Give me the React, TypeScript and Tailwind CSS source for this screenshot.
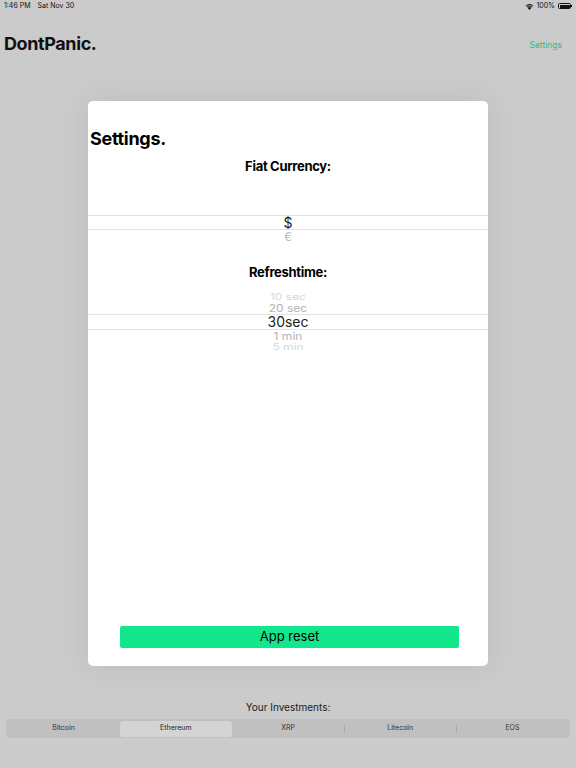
import React from "react";

const font = { fontFamily: 'Inter, "Liberation Sans", sans-serif' };

const tabs = ["Bitcoin", "Ethereum", "XRP", "Litecoin", "EOS"];

const StatusBar: React.FC = () => (
    <div className="h-[12px] flex items-center justify-between px-[4px] text-[7px] text-[#111]">
        <div className="flex gap-[7px]">
            <span>1:46 PM</span>
            <span>Sat Nov 30</span>
        </div>
        <div className="flex items-center gap-[2px]">
            <svg width="9" height="7" viewBox="0 0 12 9">
                <path d="M6 9 L3.6 6.4 A3.4 3.4 0 0 1 8.4 6.4 Z" fill="#111" />
                <path d="M2.2 5 A5.4 5.4 0 0 1 9.8 5 L8.9 5.9 A4.1 4.1 0 0 0 3.1 5.9 Z" fill="#111" />
                <path d="M0.6 3.4 A7.7 7.7 0 0 1 11.4 3.4 L10.5 4.3 A6.4 6.4 0 0 0 1.5 4.3 Z" fill="#111" />
            </svg>
            <span>100%</span>
            <div className="flex items-center ml-[1px]">
                <div className="w-[13px] h-[6px] rounded-[1.5px] border border-[#111] p-[0.5px]">
                    <div className="w-full h-full bg-[#111] rounded-[0.5px]" />
                </div>
                <div className="w-[1px] h-[2px] bg-[#111]" />
            </div>
        </div>
    </div>
);

const SettingsSheet: React.FC = () => (
    <div className="absolute left-[88px] top-[101px] w-[400px] h-[565px] bg-white rounded-[5px] shadow-[0_0_30px_rgba(0,0,0,0.08)] flex flex-col">
        <h2 className="mt-[27px] ml-[2px] text-[18px] leading-[22px] font-bold text-black tracking-[-0.3px]">Settings.</h2>
        <h3 className="mt-[8px] text-center text-[13px] leading-[16px] font-bold text-black tracking-[-0.3px]">Fiat Currency:</h3>
        <div className="mt-[41px] flex flex-col">
            <div className="h-[15px] border-y border-[#e3e3e3] flex items-center justify-center text-[14px] leading-none text-[#222]">$</div>
            <div className="h-[14px] flex items-center justify-center text-[12px] leading-none text-[#bdbdbd]">€</div>
        </div>
        <h3 className="mt-[20px] text-center text-[13px] leading-[16px] font-bold text-black tracking-[-0.3px]">Refreshtime:</h3>
        <div className="mt-[12px] h-[60px] overflow-hidden flex flex-col">
            <div className="h-[10px] flex items-center justify-center text-[12px] leading-none text-[#d6d6d6] scale-y-[0.7]">10 sec</div>
            <div className="h-[12px] flex items-center justify-center text-[12px] leading-none text-[#b3b3b3] scale-y-[0.9]">20 sec</div>
            <div className="h-[16px] border-y border-[#e3e3e3] flex items-center justify-center text-[14px] leading-none text-[#222]">30sec</div>
            <div className="h-[12px] flex items-center justify-center text-[12px] leading-none text-[#b3b3b3] scale-y-[0.9]">1 min</div>
            <div className="h-[10px] flex items-center justify-center text-[12px] leading-none text-[#d6d6d6] scale-y-[0.7]">5 min</div>
        </div>
        <div className="flex-1" />
        <button className="ml-[32px] mb-[18px] w-[339px] h-[22px] rounded-[2px] bg-[#12e78c] text-[13px] text-black">
            App reset
        </button>
    </div>
);

export default function App() {
    return (
        <div style={font} className="relative w-[576px] h-[768px] bg-[#cbcbcb] overflow-hidden flex flex-col">
            <StatusBar />
            <div className="h-[48px] flex items-center justify-between pl-[4px] pr-[14px] pt-[14px]">
                <h1 className="text-[18px] font-bold text-[#111] tracking-[-0.4px]">DontPanic.</h1>
                <span className="text-[8.5px] text-[#2fbf76] mt-[4px]">Settings</span>
            </div>
            <div className="flex-1" />
            <div className="flex flex-col items-center pb-[30px]">
                <span className="text-[10px] text-[#1a1a1a] mb-[4px]">Your Investments:</span>
                <div className="w-[564px] h-[19px] bg-[#c0c0c0] rounded-[4px] flex items-center p-[1.5px]">
                    {tabs.map((t, i) => (
                        <div
                            key={t}
                            className={
                                i === 1
                                    ? "flex-1 h-full bg-[#d4d4d4] rounded-[3px] flex items-center justify-center text-[7px] text-[#222]"
                                    : "flex-1 h-full flex items-center justify-center text-[7px] text-[#333] relative"
                            }
                        >
                            {i > 2 && <div className="absolute left-0 top-[4px] bottom-[4px] w-px bg-[#acacac]" />}
                            {t}
                        </div>
                    ))}
                </div>
            </div>
            <SettingsSheet />
        </div>
    );
}
